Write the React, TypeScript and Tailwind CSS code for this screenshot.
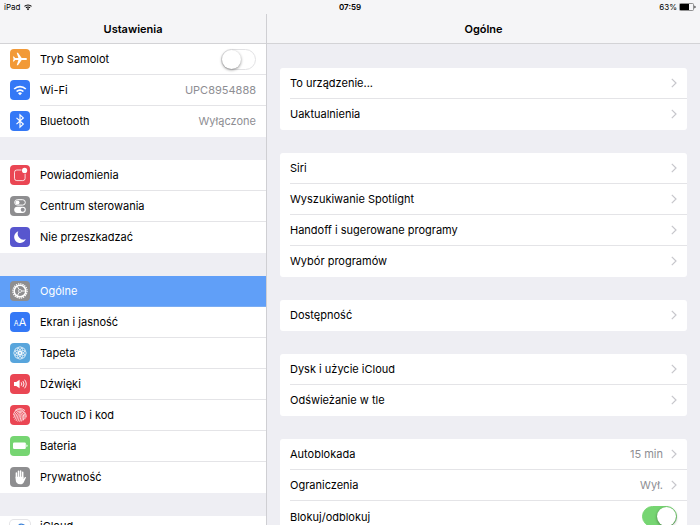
import { useState } from 'react';
import type { ReactNode } from 'react';
import clsx from 'clsx';

function PlaneIcon() {
  return (
    <svg viewBox="0 0 20 20" className="h-5 w-5" fill="#fff">
      <path d="M17 10c0-.6-.7-1-1.600-1h-3.700L8 3.700H6.700L8.400 9H5.200L3.900 7.400H2.900L3.600 10l-.7 2.600h1L5.200 11h3.200l-1.700 5.300H8l3.700-5.300h3.700c.9 0 1.600-.4 1.600-1z" />
    </svg>
  );
}

function WifiIcon({ className }: { className: string }) {
  return (
    <svg viewBox="0 0 20 20" className={className} fill="none" stroke="currentColor" strokeWidth="1.700">
      <path d="M4.200 9a8.200 8.200 0 0 1 11.600 0" />
      <path d="M6.600 11.500a4.800 4.800 0 0 1 6.800 0" />
      <path d="M10 15.300l-2-2.100a2.800 2.800 0 0 1 4 0z" fill="currentColor" stroke="none" />
    </svg>
  );
}

function BluetoothIcon() {
  return (
    <svg viewBox="0 0 20 20" className="h-5 w-5" fill="none" stroke="#fff" strokeWidth="1.200">
      <path d="M6.500 6.900l6.800 6.200L10 16.200V3.800l3.300 3.100-6.800 6.200" />
    </svg>
  );
}

function NotificationsIcon() {
  return (
    <svg viewBox="0 0 20 20" className="h-5 w-5" fill="none">
      <path
        d="M11.500 5H6.800a2.300 2.300 0 0 0-2.300 2.300v6a2.300 2.300 0 0 0 2.300 2.300h6a2.300 2.300 0 0 0 2.300-2.300V8.700"
        stroke="#fff"
        strokeWidth="0.800"
      />
      <circle cx="14.600" cy="5.400" r="2.600" fill="#fff" />
    </svg>
  );
}

function ControlCenterIcon() {
  return (
    <svg viewBox="0 0 20 20" className="h-5 w-5" fill="none">
      <rect x="4.700" y="3.700" width="10.600" height="5.400" rx="2.700" stroke="#fff" strokeWidth="1" />
      <circle cx="7.500" cy="6.400" r="2" fill="#fff" />
      <rect x="4.200" y="10.700" width="11.600" height="6.200" rx="3.100" fill="#fff" />
      <circle cx="12.700" cy="13.800" r="2" fill="#8e8e93" />
    </svg>
  );
}

function MoonIcon() {
  return (
    <svg viewBox="0 0 20 20" className="h-5 w-5" fill="#fff">
      <path d="M8.300 4.300a6 6 0 1 0 7.500 7.800A5.800 5.800 0 0 1 8.300 4.300z" />
    </svg>
  );
}

function GearIcon() {
  return (
    <svg viewBox="0 0 20 20" className="h-5 w-5" fill="none" stroke="#fff">
      <circle cx="10" cy="10" r="7.100" strokeWidth="1.200" strokeDasharray="1.300 0.930" />
      <circle cx="10" cy="10" r="5.800" strokeWidth="1.500" />
      <circle cx="10" cy="10" r="1.500" strokeWidth="0.700" />
      <path d="M11.500 10h4M9.200 8.700L7.200 5.200M9.200 11.300l-2 3.500" strokeWidth="0.900" />
    </svg>
  );
}

function DisplayIcon() {
  return (
    <span className="flex items-baseline text-white" aria-hidden="true">
      <span className="text-[7px] leading-none">A</span>
      <span className="text-[11px] leading-none">A</span>
    </span>
  );
}

function WallpaperIcon() {
  const petals = [0, 45, 90, 135, 180, 225, 270, 315];
  return (
    <svg viewBox="0 0 20 20" className="h-5 w-5" fill="none" stroke="#fff" strokeWidth="0.700">
      {petals.map((angle) => (
        <circle key={angle} cx="10" cy="6.300" r="2.500" transform={`rotate(${angle} 10 10)`} />
      ))}
      <circle cx="10" cy="10" r="1.500" />
    </svg>
  );
}

function SoundIcon() {
  return (
    <svg viewBox="0 0 20 20" className="h-5 w-5" fill="none" stroke="#fff" strokeWidth="0.900">
      <path d="M4 8h2.200L9.600 5.700v8.600L6.200 12H4z" fill="#fff" stroke="none" />
      <path d="M11.200 8.300a2.800 2.800 0 0 1 0 3.400M12.900 7a5 5 0 0 1 0 6M14.600 5.700a7 7 0 0 1 0 8.600" />
    </svg>
  );
}

function FingerprintIcon() {
  return (
    <svg viewBox="0 0 20 20" className="h-5 w-5" fill="none" stroke="#fff" strokeWidth="0.800" strokeLinecap="round">
      <path d="M5.200 5.400a7 7 0 0 1 9.600 0M3.600 9.800C4 4.900 9 3.600 12.700 5.700c2.700 1.500 3.800 4 3.500 6.300" />
      <path d="M3.900 12.600C5 10.500 4.800 6.300 10 6.200c4.500 0 5.600 4 4.900 7.700" />
      <path d="M5 14.300c1.600-2.500.8-6.600 5-6.700 3.700 0 4.200 3.800 3.400 7.400" />
      <path d="M6.300 15.500c1.800-2.900.9-6.400 3.700-6.500 2.700 0 2.700 3.600 1.700 7" />
      <path d="M8 16.200c1.400-2.500.9-5.800 2-5.800 1.300 0 .8 3.400-.2 6" />
    </svg>
  );
}

function BatteryIcon() {
  return (
    <svg viewBox="0 0 20 20" className="h-5 w-5" fill="#fff">
      <rect x="3" y="6.400" width="12.800" height="6.600" rx="1.200" />
      <path d="M16.400 8.400c1 .3 1.200.8 1.200 1.300s-.2 1-1.200 1.300z" />
    </svg>
  );
}

function HandIcon() {
  return (
    <svg viewBox="0 0 20 20" className="h-5 w-5" fill="none" stroke="#fff" strokeWidth="1.500" strokeLinecap="round">
      <path d="M6.400 11V5.900M8.500 10V4.200M10.600 10V4M12.700 11V5.300" />
      <path d="M5.650 9.800h7.800v2.200l1.500-1.900c.5-.5 1.300-.1 1 .6l-2.300 4.800c-.6 1.200-1.500 1.800-3.200 1.800-3.200 0-4.800-1.600-4.800-4.700z" fill="#fff" stroke="none" />
    </svg>
  );
}

function CloudIcon() {
  return (
    <svg viewBox="0 0 20 20" className="h-5 w-5" fill="none" stroke="#3b82d8" strokeWidth="1.200">
      <path d="M5.500 13.500a2.700 2.700 0 0 1-.2-5.400 3 3 0 0 1 3-2.400 4.200 4.200 0 0 1 7.400 2.900 2.500 2.500 0 0 1-.6 4.900z" />
    </svg>
  );
}

function Chevron() {
  return (
    <svg viewBox="0 0 6 10" className="ml-2 h-[10px] w-[6px] shrink-0" fill="none" stroke="#c7c7cc" strokeWidth="1.200">
      <path d="M.8.800L5 5 .8 9.200" />
    </svg>
  );
}

interface SwitchProps {
  id: string;
  checked: boolean;
  onChange: (checked: boolean) => void;
}

function Switch({ id, checked, onChange }: SwitchProps) {
  return (
    <input
      id={id}
      type="checkbox"
      role="switch"
      checked={checked}
      onChange={(e) => onChange(e.target.checked)}
      className="flex h-[21px] w-[35px] shrink-0 cursor-pointer appearance-none items-center rounded-full border border-[#e2e2e4] bg-white before:h-[19px] before:w-[19px] before:rounded-full before:bg-white before:shadow-[0_1px_3px_rgba(0,0,0,0.45)] checked:justify-end checked:border-[#76d572] checked:bg-[#76d572]"
    />
  );
}

interface MenuItem {
  id: string;
  label: string;
  color: string;
  icon: ReactNode;
  value?: string;
  toggle?: boolean;
}

const menuGroups: MenuItem[][] = [
  [
    { id: 'airplane', label: 'Tryb Samolot', color: 'bg-[#f29a38]', icon: <PlaneIcon />, toggle: true },
    { id: 'wifi', label: 'Wi-Fi', color: 'bg-[#3478f6]', icon: <WifiIcon className="h-5 w-5 text-white" />, value: 'UPC8954888' },
    { id: 'bluetooth', label: 'Bluetooth', color: 'bg-[#3478f6]', icon: <BluetoothIcon />, value: 'Wyłączone' },
  ],
  [
    { id: 'notifications', label: 'Powiadomienia', color: 'bg-[#ea4653]', icon: <NotificationsIcon /> },
    { id: 'control', label: 'Centrum sterowania', color: 'bg-[#8e8e90]', icon: <ControlCenterIcon /> },
    { id: 'dnd', label: 'Nie przeszkadzać', color: 'bg-[#5856ce]', icon: <MoonIcon /> },
  ],
  [
    { id: 'general', label: 'Ogólne', color: 'bg-[#8e8e90]', icon: <GearIcon /> },
    { id: 'display', label: 'Ekran i jasność', color: 'bg-[#3478f6]', icon: <DisplayIcon /> },
    { id: 'wallpaper', label: 'Tapeta', color: 'bg-[#58a5dc]', icon: <WallpaperIcon /> },
    { id: 'sounds', label: 'Dźwięki', color: 'bg-[#ea4653]', icon: <SoundIcon /> },
    { id: 'touchid', label: 'Touch ID i kod', color: 'bg-[#ea4653]', icon: <FingerprintIcon /> },
    { id: 'battery', label: 'Bateria', color: 'bg-[#76d572]', icon: <BatteryIcon /> },
    { id: 'privacy', label: 'Prywatność', color: 'bg-[#8e8e90]', icon: <HandIcon /> },
  ],
];

interface OptionItem {
  label: string;
  value?: string;
}

const optionGroups: OptionItem[][] = [
  [{ label: 'To urządzenie...' }, { label: 'Uaktualnienia' }],
  [
    { label: 'Siri' },
    { label: 'Wyszukiwanie Spotlight' },
    { label: 'Handoff i sugerowane programy' },
    { label: 'Wybór programów' },
  ],
  [{ label: 'Dostępność' }],
  [{ label: 'Dysk i użycie iCloud' }, { label: 'Odświeżanie w tle' }],
];

const lockOptions: OptionItem[] = [
  { label: 'Autoblokada', value: '15 min' },
  { label: 'Ograniczenia', value: 'Wył.' },
];

function IconTile({ color, children }: { color: string; children: ReactNode }) {
  return (
    <span className={clsx('flex h-5 w-5 shrink-0 items-center justify-center rounded', color)}>
      {children}
    </span>
  );
}

function OptionRow({ label, value }: OptionItem) {
  return (
    <li className="group pl-[10px]">
      <button
        type="button"
        className="flex h-[31px] w-full items-center border-b border-[#e4e4e7] pr-[10px] text-left group-last:border-transparent"
      >
        <span className="flex-1">{label}</span>
        {value && <span className="text-[#8e8e93]">{value}</span>}
        <Chevron />
      </button>
    </li>
  );
}

function App() {
  const [selected, setSelected] = useState('general');
  const [airplane, setAirplane] = useState(false);
  const [coverLock, setCoverLock] = useState(true);

  return (
    <div className="flex h-screen flex-col overflow-hidden bg-[#eeeef3] font-['Inter','Liberation_Sans',sans-serif] text-[11px] leading-4 text-black">
      {/* pasek stanu */}
      <div className="flex h-[14px] shrink-0 items-center bg-[#f5f5f7] px-1 text-[8px] leading-none">
        <div className="flex flex-1 items-center gap-[2px]">
          <span>iPad</span>
          <WifiIcon className="h-3 w-3" />
        </div>
        <span className="font-semibold">07:59</span>
        <div className="flex flex-1 items-center justify-end gap-[2px]">
          <span>63%</span>
          <svg viewBox="0 0 17 8" className="h-2 w-[17px]" fill="none">
            <rect x="0.500" y="0.500" width="14" height="7" rx="1" stroke="#777" strokeWidth="0.800" />
            <rect x="1" y="1" width="9" height="6" fill="#000" />
            <path d="M15.500 2.500c1.400.6 1.400 2.400 0 3z" fill="#000" />
          </svg>
        </div>
      </div>

      <div className="flex min-h-0 flex-1">
        {/* menu */}
        <nav className="flex w-[38%] shrink-0 flex-col">
          <h1 className="flex h-[30px] shrink-0 items-center justify-center border-b border-[#d3d3d6] bg-[#f5f5f7] font-semibold">
            Ustawienia
          </h1>
          <div className="flex flex-1 flex-col gap-[23px] overflow-hidden">
            {menuGroups.map((items) => (
              <ul key={items[0].id} className="shrink-0 bg-white">
                {items.map((item) => {
                  const active = item.id === selected;
                  const rowClass = clsx(
                    'flex h-[31px] flex-1 items-center border-b pr-[10px] text-left group-last:border-transparent',
                    active ? 'border-[#7badf3]' : 'border-[#e4e4e7]',
                  );
                  return (
                    <li
                      key={item.id}
                      className={clsx('group flex gap-[10px] pl-[10px]', active && 'bg-[#609ff8] text-white')}
                    >
                      <span className="pt-[5px]">
                        <IconTile color={item.color}>{item.icon}</IconTile>
                      </span>
                      {item.toggle ? (
                        <div className={rowClass}>
                          <label htmlFor={item.id} className="flex-1">
                            {item.label}
                          </label>
                          <Switch id={item.id} checked={airplane} onChange={setAirplane} />
                        </div>
                      ) : (
                        <button type="button" onClick={() => setSelected(item.id)} className={rowClass}>
                          <span className="flex-1">{item.label}</span>
                          {item.value && (
                            <span className={active ? 'text-white' : 'text-[#8e8e93]'}>{item.value}</span>
                          )}
                        </button>
                      )}
                    </li>
                  );
                })}
              </ul>
            ))}
            <ul className="shrink-0 bg-white">
              <li>
                <button type="button" className="flex h-[42px] w-full items-start gap-[10px] px-[10px] pt-1 text-left leading-3">
                  <IconTile color="bg-white ring-1 ring-[#e4e4e7]">
                    <CloudIcon />
                  </IconTile>
                  <span>iCloud</span>
                </button>
              </li>
            </ul>
          </div>
        </nav>

        {/* szczegóły */}
        <main className="flex min-w-0 flex-1 flex-col border-l border-[#cfcfd3]">
          <h2 className="flex h-[30px] shrink-0 items-center justify-center border-b border-[#d3d3d6] bg-[#f5f5f7] font-semibold">
            Ogólne
          </h2>
          <div className="flex flex-1 flex-col gap-[23px] overflow-hidden px-[13px] pt-6">
            {optionGroups.map((items) => (
              <ul key={items[0].label} className="shrink-0 overflow-hidden rounded-[3px] bg-white">
                {items.map((item) => (
                  <OptionRow key={item.label} {...item} />
                ))}
              </ul>
            ))}
            <ul className="shrink-0 overflow-hidden rounded-[3px] bg-white">
              {lockOptions.map((item) => (
                <OptionRow key={item.label} {...item} />
              ))}
              <li className="flex h-[31px] items-center px-[10px]">
                <label htmlFor="cover-lock" className="flex-1">
                  Blokuj/odblokuj
                </label>
                <Switch id="cover-lock" checked={coverLock} onChange={setCoverLock} />
              </li>
            </ul>
          </div>
        </main>
      </div>
    </div>
  );
}

export default App;
